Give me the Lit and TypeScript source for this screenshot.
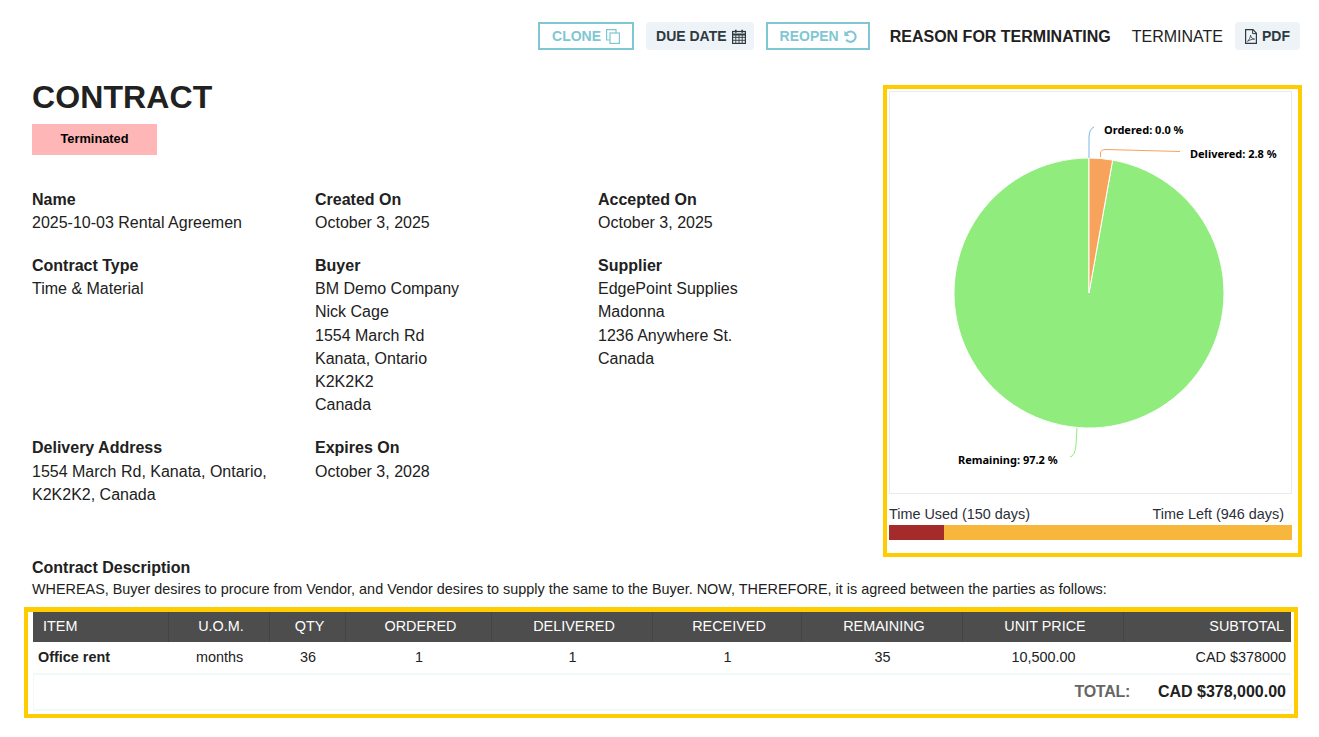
import { LitElement, html, css, svg } from "lit";
import { customElement } from "lit/decorators.js";

const CX = 1089, CY = 293, R = 135;
function slicePath(a0: number, a1: number) {
  const p = (a: number) => [CX + R * Math.sin(a * Math.PI / 180), CY - R * Math.cos(a * Math.PI / 180)];
  const [x0, y0] = p(a0), [x1, y1] = p(a1);
  return `M${CX} ${CY}L${x0} ${y0}A${R} ${R} 0 ${a1 - a0 > 180 ? 1 : 0} 1 ${x1} ${y1}Z`;
}

const cloneIcon = html`<svg class="ic" width="14" height="15" viewBox="0 0 14 15" fill="none" stroke="currentColor" stroke-width="1.2"><path d="M10 4V.6H.6V11H4"/><rect x="4" y="4" width="9.4" height="10.4"/></svg>`;
const calIcon = html`<svg class="ic" width="14" height="15" viewBox="0 0 14 15" fill="none" stroke="currentColor"><rect x=".6" y="2.5" width="12.8" height="11.9" stroke-width="1.2"/><path d="M.6 5.5h12.8" stroke-width="2"/><path d="M.6 8.4h12.8M.6 11.3h12.8M3.8 5.5v9M7 5.5v9M10.2 5.5v9" stroke-width=".9"/><path d="M3.8.8v3M10.2.8v3" stroke-width="1.6"/></svg>`;
const undoIcon = html`<svg class="ic" width="13" height="13" viewBox="0 0 13 13" fill="none" stroke="currentColor"><path d="M2.4 3.4A5.200 5.200 0 1 1 2.200 9.600" stroke-width="2.1"/><path d="M.4 .8v5.200h5.200z" fill="currentColor" stroke="none"/></svg>`;
const pdfIcon = html`<svg class="ic" width="14" height="15" viewBox="0 0 14 15" fill="none" stroke="currentColor"><path d="M1.600.6h7.400l3.400 3.600v10.200H1.600z" stroke-width="1.200"/><path d="M8.600.6v4h3.800" stroke-width="1"/><path d="M3.400 12.400C5 11.200 6.400 8.400 6.600 6.200c.3 2.400 1.600 3.600 4 3.900-2.400 0-5.400 1-7.200 2.300z" stroke-width=".8"/></svg>`;

const cols: string[] = ["c-item", "c-uom", "c-qty", "c-ord", "c-del", "c-rec", "c-rem", "c-unit", "c-sub"];

@customElement("app-root")
export class AppRoot extends LitElement {
  static styles = css`
    :host { display: block; width: 1319px; height: 737px; overflow: hidden; background: #fff; color: #212121;
      font-family: "Liberation Sans", Arial, sans-serif; font-size: 16px; }
    * { box-sizing: border-box; }
    .page { padding: 22px 19px 0 32px; }
    .toolbar { display: flex; justify-content: flex-end; align-items: center; height: 28px; }
    .btn { display: flex; align-items: center; height: 28px; font-size: 14px; font-weight: 700; white-space: nowrap; }
    .btn .ic { margin-left: 5px; }
    .outline { border: 2px solid #7fc7d3; color: #7fc7d3; padding: 0 12px; background: #fff; }
    .reopen { padding-right: 11px; }
    .soft { background: #edf3f7; color: #2f3a40; border-radius: 4px; padding: 0 8px 0 10px; }
    .ml12 { margin-left: 12px; }
    .reason { font-weight: 700; margin-left: 20px; padding-top: 1px; }
    .term { margin-left: 21px; padding-top: 1px; }
    .pdf { margin-left: 12px; padding: 0 10px 0 9px; }
    .btn.pdf .ic { margin-left: 0; margin-right: 4px; }
    .main { display: flex; justify-content: space-between; align-items: flex-start; margin-top: 29px; }
    .left { width: 849px; }
    h1 { margin: 0; font-size: 32px; line-height: 37px; font-weight: 700; color: #212121; letter-spacing: .1px; }
    .badge { width: 125px; height: 31px; margin-top: 8px; padding-bottom: 2px; background: #ffb6b6; color: #000; font-size: 12.8px; font-weight: 700;
      display: flex; align-items: center; justify-content: center; }
    .grid { display: grid; grid-template-columns: 283px 283px 283px; margin-top: 33px; line-height: 23.2px; }
    .cell { margin-bottom: 19.6px; }
    .cell.tall { margin-bottom: 20px; }
    .cell b { display: block; font-weight: 700; }
    .cell div { white-space: nowrap; }
    .right { width: 419px; margin-top: 6px; margin-right: -2px; height: 472px; border: 4px solid #ffcc00; padding: 2px 6px 0 2px; }
    .chart { width: 403px; height: 403px; border: 1px solid #e8ecee; }
    .chart svg { display: block; }
    .chart text { font-family: "Noto Sans", "DejaVu Sans", sans-serif; font-size: 11px; font-weight: 700; fill: #000; }
    .timeline { display: flex; justify-content: space-between; width: 403px; padding: 0 8px 0 0; margin-top: 9px; font-size: 14.4px; line-height: 22px; color: #2b2f3a; }
    .bar { display: flex; width: 403px; height: 15px; background: #f6b73c; }
    .used { background: #a52a2a; }
    .desc-t { font-weight: 700; line-height: 20px; padding-top: 1px; height: 20px; }
    .desc { font-size: 14.4px; line-height: 24px; white-space: nowrap; }
    .tbox { margin: 6px -2px 0 -8px; height: 111px; width: 1274px; border: 4px solid #ffcc00; border-top-width: 5px; padding: 0 3px 0 5px; }
    table { width: 1258px; table-layout: fixed; border-collapse: collapse; font-size: 14.4px; }
    th { height: 30px; padding: 0 6px 2px 11px; background: #4d4d4d; color: #fff; font-weight: 400; font-size: 14.4px; text-align: center; border-left: 1px solid #444; }
    th:first-child { text-align: left; border-left: 0; padding-left: 10px; }
    th:last-child { padding-right: 7px; }
    th:last-child, td:last-child { text-align: right; }
    td { height: 32px; padding: 0 4px 1px 6px; text-align: center; border-bottom: 2px solid #f3f8f8; color: #212121; }
    td:first-child { text-align: left; font-weight: 700; padding-left: 5px; }
    td:last-child { padding-right: 5px; }
    .c-item { width: 135px; } .c-uom { width: 101px; } .c-qty { width: 76px; } .c-ord { width: 146px; }
    .c-del { width: 161px; } .c-rec { width: 149px; } .c-rem { width: 161px; } .c-unit { width: 161px; } .c-sub { width: 168px; }
    .total { display: flex; justify-content: flex-end; align-items: center; gap: 28px; width: 1258px; height: 36px; padding: 0 5px 0 0;
      font-weight: 700; border: solid #f3f8f8; border-width: 0 0 2px 1px; }
    .total span:first-child { color: #666; letter-spacing: -.3px; }
  `;

  render() {
    const a = 2.8 * 3.6;
    const cell = (t: string, lines: string[], cls = "cell") => html`<div class=${cls}><b>${t}</b>${lines.map(l => html`<div>${l}</div>`)}</div>`;
    return html`<div class="page">
      <div class="toolbar">
        <div class="btn outline">CLONE${cloneIcon}</div>
        <div class="btn soft ml12">DUE DATE${calIcon}</div>
        <div class="btn outline reopen ml12">REOPEN${undoIcon}</div>
        <div class="reason">REASON FOR TERMINATING</div>
        <div class="term">TERMINATE</div>
        <div class="btn soft pdf">${pdfIcon}PDF</div>
      </div>
      <div class="main">
        <div class="left">
          <h1>CONTRACT</h1>
          <div class="badge">Terminated</div>
          <div class="grid">
            ${cell("Name", ["2025-10-03 Rental Agreemen"])}
            ${cell("Created On", ["October 3, 2025"])}
            ${cell("Accepted On", ["October 3, 2025"])}
            ${cell("Contract Type", ["Time & Material"])}
            ${cell("Buyer", ["BM Demo Company", "Nick Cage", "1554 March Rd", "Kanata, Ontario", "K2K2K2", "Canada"], "cell tall")}
            ${cell("Supplier", ["EdgePoint Supplies", "Madonna", "1236 Anywhere St.", "Canada"])}
            ${cell("Delivery Address", ["1554 March Rd, Kanata, Ontario,", "K2K2K2, Canada"])}
            ${cell("Expires On", ["October 3, 2028"])}
          </div>
        </div>
        <div class="right">
          <div class="chart">
            <svg width="401" height="401" viewBox="890 92 401 401">
              ${svg`
                <path d=${slicePath(a, 360)} fill="#90ed7d" stroke="#fff" stroke-width="1"/>
                <path d=${slicePath(0, a)} fill="#f7a35c" stroke="#fff" stroke-width="1"/>
                <path d="M1089 158V138Q1089 129 1094 127" fill="none" stroke="#7cb5ec" stroke-width="1"/>
                <path d="M1100.500 157V153Q1100.500 149.500 1106 149.500L1180 151.500" fill="none" stroke="#f7a35c" stroke-width="1"/>
                <path d="M1077 428L1076 445Q1075 456 1070 457" fill="none" stroke="#90ed7d" stroke-width="1"/>
                <text x="1104" y="134">Ordered: 0.0 %</text>
                <text x="1190" y="158">Delivered: 2.8 %</text>
                <text x="958" y="464">Remaining: 97.2 %</text>
              `}
            </svg>
          </div>
          <div class="timeline"><span>Time Used (150 days)</span><span>Time Left (946 days)</span></div>
          <div class="bar"><div class="used" style="width:${(150 / 1096) * 100 * 0.995}%"></div></div>
        </div>
      </div>
      <div class="desc-t">Contract Description</div>
      <div class="desc">WHEREAS, Buyer desires to procure from Vendor, and Vendor desires to supply the same to the Buyer. NOW, THEREFORE, it is agreed between the parties as follows:</div>
      <div class="tbox">
        <table>
          <colgroup>${cols.map(c => html`<col class=${c} />`)}</colgroup>
          <thead><tr>${["ITEM", "U.O.M.", "QTY", "ORDERED", "DELIVERED", "RECEIVED", "REMAINING", "UNIT PRICE", "SUBTOTAL"].map(h => html`<th>${h}</th>`)}</tr></thead>
          <tbody><tr>${["Office rent", "months", "36", "1", "1", "1", "35", "10,500.00", "CAD $378000"].map(v => html`<td>${v}</td>`)}</tr></tbody>
        </table>
        <div class="total"><span>TOTAL:</span><span>CAD $378,000.00</span></div>
      </div>
    </div>`;
  }
}
